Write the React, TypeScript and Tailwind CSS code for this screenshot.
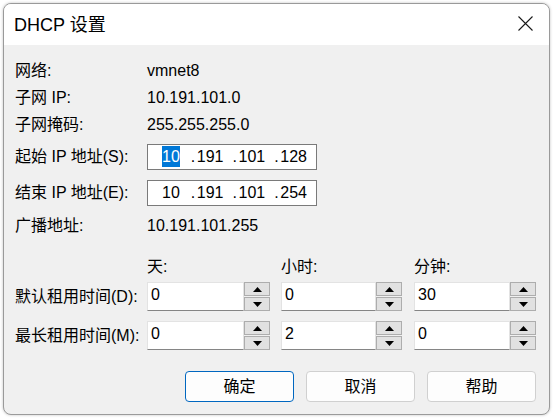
import React from "react";

function Up() {
  return (
    <svg width="9" height="5" viewBox="0 0 9 5">
      <polygon points="0,5 4.5,0 9,5" fill="#000" />
    </svg>
  );
}
function Down() {
  return (
    <svg width="9" height="5" viewBox="0 0 9 5">
      <polygon points="0,0 9,0 4.5,5" fill="#000" />
    </svg>
  );
}

function Spin({ value, w }: { value: string; w: string }) {
  return (
    <div className={`flex h-[29px] ${w}`}>
      <div className="flex-1 bg-white border border-[#e3e3e3] border-b-[#858585] pl-[3px] pt-[2px] leading-[20px]">
        {value}
      </div>
      <div className="w-[26px] flex flex-col gap-px">
        <div className="flex-1 bg-[#e1e1e1] border border-[#adadad] flex items-center justify-center">
          <Up />
        </div>
        <div className="flex-1 bg-[#e1e1e1] border border-[#adadad] flex items-center justify-center">
          <Down />
        </div>
      </div>
    </div>
  );
}

function TextRow({ h, label, value }: { h: string; label: string; value: string }) {
  return (
    <div className={`flex items-center ${h}`}>
      <div className="w-[132px]">{label}</div>
      <div>{value}</div>
    </div>
  );
}

function IpRow({ h, label, first, rest, selected }: { h: string; label: string; first: string; rest: string[]; selected?: boolean }) {
  return (
    <div className={`flex items-center ${h}`}>
      <div className="w-[132px]">{label}</div>
      <div className="w-[170px] h-[26px] border border-[#7a7a7a] bg-white flex items-center pl-[14px]">
        <span
          className={
            selected
              ? "w-[18px] h-[21px] bg-[#0078d7] text-white flex items-center justify-center"
              : "w-[18px] h-[21px] flex items-center justify-center"
          }
        >
          {first}
        </span>
        <span className="w-[11px]" />
        {rest.map((r, i) => (
          <span key={i} className="w-[42px] flex">
            <span className="w-[6px]">.</span>
            <span>{r}</span>
          </span>
        ))}
      </div>
    </div>
  );
}

export default function App() {
  return (
    <div className="w-[553px] h-[419px] bg-white pt-[3px] pl-[3px] font-['Liberation_Sans','Noto_Sans_CJK_SC',sans-serif] text-[16px] leading-[20px] text-black overflow-hidden">
      <div className="w-[547px] h-[412px] rounded-[8px] border border-[#9a9a9a] bg-[#f0f0f0] overflow-hidden flex flex-col shadow-[0_0_3px_rgba(0,0,0,0.25)]">
        <div className="h-[41px] bg-white flex items-center justify-between pl-[10px] pr-[16px]">
          <div className="text-[18px] leading-[22px]">DHCP 设置</div>
          <svg width="15" height="15" viewBox="0 0 15 15" className="mb-[3px]">
            <path d="M0.5 0.5 L14.5 14.5 M14.5 0.5 L0.5 14.5" stroke="#1a1a1a" strokeWidth="1.1" />
          </svg>
        </div>
        <div className="flex flex-col pl-[11px] pt-[12px]">
          <TextRow h="h-[27px]" label="网络:" value="vmnet8" />
          <TextRow h="h-[27px]" label="子网 IP:" value="10.191.101.0" />
          <TextRow h="h-[27px]" label="子网掩码:" value="255.255.255.0" />
          <IpRow h="h-[37px]" label="起始 IP 地址(S):" first="10" rest={["191", "101", "128"]} selected />
          <IpRow h="h-[36px]" label="结束 IP 地址(E):" first="10" rest={["191", "101", "254"]} />
          <TextRow h="h-[30px]" label="广播地址:" value="10.191.101.255" />

          <div className="flex items-center h-[18px] mt-[17px]">
            <div className="w-[132px]" />
            <div className="w-[134px]">天:</div>
            <div className="w-[133px]">小时:</div>
            <div>分钟:</div>
          </div>
          <div className="flex items-center mt-[6px]">
            <div className="w-[132px]">默认租用时间(D):</div>
            <Spin value="0" w="w-[123px]" />
            <div className="w-[11px]" />
            <Spin value="0" w="w-[121px]" />
            <div className="w-[12px]" />
            <Spin value="30" w="w-[122px]" />
          </div>
          <div className="flex items-center mt-[10px]">
            <div className="w-[132px]">最长租用时间(M):</div>
            <Spin value="0" w="w-[123px]" />
            <div className="w-[11px]" />
            <Spin value="2" w="w-[121px]" />
            <div className="w-[12px]" />
            <Spin value="0" w="w-[122px]" />
          </div>
          <div className="flex mt-[21px] gap-[12px] pl-[170px]">
            <div className="w-[109px] h-[31px] rounded-[4px] border border-[#0067c0] bg-[#fdfdfd] flex items-center justify-center">
              确定
            </div>
            <div className="w-[109px] h-[31px] rounded-[4px] border border-[#d0d0d0] bg-[#fdfdfd] flex items-center justify-center">
              取消
            </div>
            <div className="w-[109px] h-[31px] rounded-[4px] border border-[#d0d0d0] bg-[#fdfdfd] flex items-center justify-center">
              帮助
            </div>
          </div>
        </div>
      </div>
    </div>
  );
}
